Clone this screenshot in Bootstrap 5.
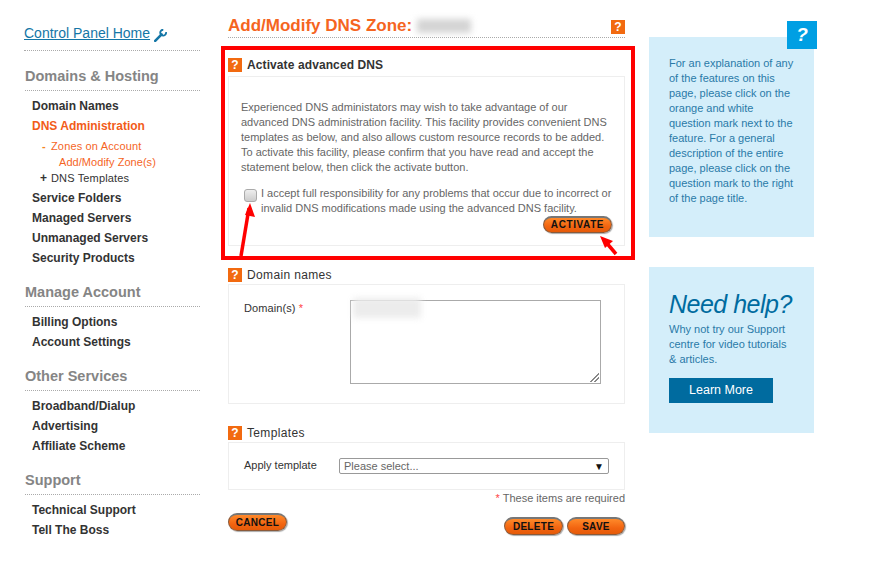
<!doctype html>
<html lang="en"><head><meta charset="utf-8"><title>DNS</title>
<link rel="stylesheet" href="https://cdn.jsdelivr.net/npm/bootstrap@5.3.0/dist/css/bootstrap.min.css">
<style>
body{font-family:"Liberation Sans",Arial,sans-serif;font-size:12px;line-height:15px;color:#666;background:#fff;}
.shell{width:871px;height:567px;overflow:hidden;position:relative;}
.side{width:176px;margin-left:24px;margin-right:28px;padding-top:25px;flex:none;}
.home{font-size:14px;line-height:17px;color:#1476a6;text-decoration:underline;}
.homerow{padding-bottom:11px;border-bottom:1px dotted #aaa;margin-bottom:17px;height:26px;}
.sect{font-size:14.5px;font-weight:700;color:#858585;line-height:17px;margin:0 0 0 1px;padding-bottom:5px;border-bottom:1px dotted #aaa;}
.mlist{list-style:none;margin:0 0 0 8px;padding:5px 0 0;}
.mlist>li{font-weight:700;font-size:12px;line-height:20px;color:#333;}
.mlist>li.on{color:#f25c19;}
.sublist{list-style:none;margin:0;padding:2px 0 2px 10px;font-weight:400;font-size:11px;line-height:16px;letter-spacing:.15px;color:#333;}
.sublist .act{color:#f5651f;}
.sublist .deep{padding-left:17px;color:#f5651f;letter-spacing:.05px;}
.dash{display:inline-block;width:9px;color:#f5851f;font-weight:700;}
.plus{display:inline-block;width:9px;margin-left:-2px;margin-right:2px;color:#333;font-weight:700;font-size:12px;}
.gap1{margin-top:16px;}
.gap2{margin-top:16px;}
.mainc{width:397px;flex:none;padding-top:16px;}
.ptitle{height:22px;border-bottom:1px dotted #aaa;}
.ptitle h1{font-size:17px;line-height:20px;font-weight:700;color:#f5651f;margin:0;}
.blurred{display:inline-block;width:54px;height:14px;background:#d4d4d4;filter:blur(3px);vertical-align:-2px;}
.qm{width:14px;height:14px;background:#f26a10;color:#fff;font-weight:700;font-size:12px;line-height:14px;text-align:center;flex:none;}
.shead{display:flex;align-items:center;gap:5px;height:14px;font-size:12px;font-weight:700;color:#333;letter-spacing:.1px;}
.shead.lite{font-weight:400;letter-spacing:.35px;}
.mt20{margin-top:20px;}
.mt22{margin-top:22px;}
.fbox{border:1px solid #eee;}
.b1{padding:23px 12px 0 12px;height:170px;margin-top:4px;font-size:11px;}
.b1 p{margin:0;}
.chk{margin-top:11px;display:flex;gap:3px;align-items:flex-start;white-space:nowrap;}
.fakechk{width:13px;height:13px;border:1px solid #aaa;border-radius:3px;background:linear-gradient(#eee,#ccc);flex:none;margin-top:3px;margin-left:3px;margin-right:1px;}
.actrow{margin-top:0;}
.pill{display:inline-block;height:18px;border-radius:9px;background:linear-gradient(#ff8a2a,#f26410 60%,#e55a08);border:1px solid #8a5a3a;border-top:2px solid #777;box-shadow:1px 1px 1px #aaa;color:#111;font-weight:700;font-size:10px;line-height:15px;text-align:center;letter-spacing:.3px;padding:0;}
.acti{width:69px;height:17px;line-height:14px;letter-spacing:.6px;}
.cancel{width:59px;}
.delete{width:59px;}
.save{width:58px;}
.btnpair{margin-top:4px;}
.footrow{margin-top:8px;}
.b2{height:120px;margin-top:2px;padding:15px 23px 0 15px;display:flex;font-size:11px;letter-spacing:.1px;color:#333;}
.lab{width:106px;flex:none;padding-top:1px;}
.req{color:#f44;}
.tarea{width:251px;height:84px;border:1px solid #aaa;position:relative;}
.tblur{position:absolute;left:2px;top:-3px;width:68px;height:20px;background:#ececec;filter:blur(3px);}
.grip{position:absolute;right:1px;bottom:1px;width:9px;height:9px;background:linear-gradient(135deg,transparent 50%,#888 50%,#888 58%,transparent 58%,transparent 72%,#888 72%,#888 80%,transparent 80%);}
.b3{height:48px;margin-top:2px;padding:15px 15px 0 15px;display:flex;font-size:11px;color:#333;}
.b3 .lab{width:95px;padding-top:0;}
.fsel{width:270px;height:16px;border:1px solid #999;border-radius:2px;display:flex;justify-content:space-between;padding:0 4px;line-height:15px;color:#666;font-size:11px;}
.fsel i{font-style:normal;color:#111;font-size:10px;}
.reqnote{text-align:right;font-size:11px;line-height:14px;margin-top:1px;}
.help{width:165px;margin-left:24px;flex:none;padding-top:37px;}
.hbox{background:#d4eefa;color:#2a7aa8;font-size:11px;line-height:15px;padding:19px 20px 0 20px;position:relative;white-space:nowrap;}
.h1b{height:200px;}
.h2b{height:166px;margin-top:30px;padding-top:22px;}
.hq{position:absolute;right:-3px;top:-16px;width:30px;height:28px;background:#009fe3;color:#fff;font-weight:700;font-style:italic;font-size:19px;line-height:28px;text-align:center;}
.need{font-size:25px;line-height:30px;font-style:italic;color:#006b9f;margin:0 0 3px;letter-spacing:-.5px;font-weight:400;}
.lm{display:block;width:104px;height:25px;background:#006b9f;color:#fff;text-align:center;font-size:12.5px;line-height:25px;margin-top:11px;text-decoration:none;}
.redbox{position:absolute;left:221px;top:46px;width:414px;height:214px;border:4px solid #f00;pointer-events:none;}
.arrows{position:absolute;left:0;top:0;pointer-events:none;}
</style></head><body>
<div class="shell d-flex align-items-start">
 <nav class="side">
  <div class="homerow d-flex align-items-start gap-1"><a class="home" href="#">Control Panel Home</a>
   <svg width="13" height="13" viewBox="0 0 13 13" class="mt-1" aria-hidden="true"><path d="M1.2 11.8 L7.6 5.4" stroke="#1476a6" stroke-width="2.6" fill="none" stroke-linecap="round"/><path d="M12 3.2 A2.9 2.9 0 1 1 9.3 .8" stroke="#1476a6" stroke-width="1.9" fill="none"/></svg></div>
  <h2 class="sect">Domains &amp; Hosting</h2>
  <ul class="mlist">
   <li>Domain Names</li>
   <li class="on">DNS Administration
    <ul class="sublist"><li class="act"><span class="dash">-</span>Zones on Account</li><li class="deep">Add/Modify Zone(s)</li><li><span class="plus">+</span>DNS Templates</li></ul></li>
   <li>Service Folders</li><li>Managed Servers</li><li>Unmanaged Servers</li><li>Security Products</li>
  </ul>
  <h2 class="sect gap1">Manage Account</h2>
  <ul class="mlist"><li>Billing Options</li><li>Account Settings</li></ul>
  <h2 class="sect gap2">Other Services</h2>
  <ul class="mlist"><li>Broadband/Dialup</li><li>Advertising</li><li>Affiliate Scheme</li></ul>
  <h2 class="sect gap2">Support</h2>
  <ul class="mlist"><li>Technical Support</li><li>Tell The Boss</li></ul>
 </nav>
 <main class="mainc">
  <div class="ptitle d-flex justify-content-between"><h1>Add/Modify DNS Zone: <span class="blurred"></span></h1><div class="qm mt-1">?</div></div>
  <div class="shead mt20"><span class="qm">?</span>Activate advanced DNS</div>
  <div class="fbox b1">
   <p>Experienced DNS administators may wish to take advantage of our<br>advanced DNS administration facility. This facility provides convenient DNS<br>templates as below, and also allows custom resource records to be added.<br>To activate this facility, please confirm that you have read and accept the<br>statement below, then click the activate button.</p>
   <div class="chk"><span class="fakechk"></span><span>I accept full responsibility for any problems that occur due to incorrect or<br>invalid DNS modifications made using the advanced DNS facility.</span></div>
   <div class="text-end actrow"><span class="pill acti">ACTIVATE</span></div>
  </div>
  <div class="shead lite mt22"><span class="qm">?</span>Domain names</div>
  <div class="fbox b2"><div class="lab">Domain(s) <span class="req">*</span></div><div class="tarea"><span class="tblur"></span><span class="grip"></span></div></div>
  <div class="shead lite mt22"><span class="qm">?</span>Templates</div>
  <div class="fbox b3"><div class="lab">Apply template</div><div class="fsel"><span>Please select...</span><i>▼</i></div></div>
  <div class="reqnote"><span class="req">*</span> These items are required</div>
  <div class="d-flex justify-content-between align-items-start footrow"><span class="pill cancel">CANCEL</span><div class="d-flex gap-1 btnpair"><span class="pill delete">DELETE</span><span class="pill save">SAVE</span></div></div>
 </main>
 <aside class="help">
  <div class="hbox h1b"><span class="hq">?</span>For an explanation of any<br>of the features on this<br>page, please click on the<br>orange and white<br>question mark next to the<br>feature. For a general<br>description of the entire<br>page, please click on the<br>question mark to the right<br>of the page title.</div>
  <div class="hbox h2b"><h2 class="need">Need help?</h2>Why not try our Support<br>centre for video tutorials<br>&amp; articles.<a class="lm" href="#">Learn More</a></div>
 </aside>
 <div class="redbox"></div>
 <svg class="arrows" width="871" height="567" aria-hidden="true"><path d="M241 256 L249 208" stroke="#f00" stroke-width="3.5"/><path d="M250 203 L255 217 L245 215Z" fill="#f00"/><path d="M616 254 L605 241" stroke="#f00" stroke-width="3.5"/><path d="M600 236 L613 241 L605 248Z" fill="#f00"/></svg>
</div>
</body></html>
